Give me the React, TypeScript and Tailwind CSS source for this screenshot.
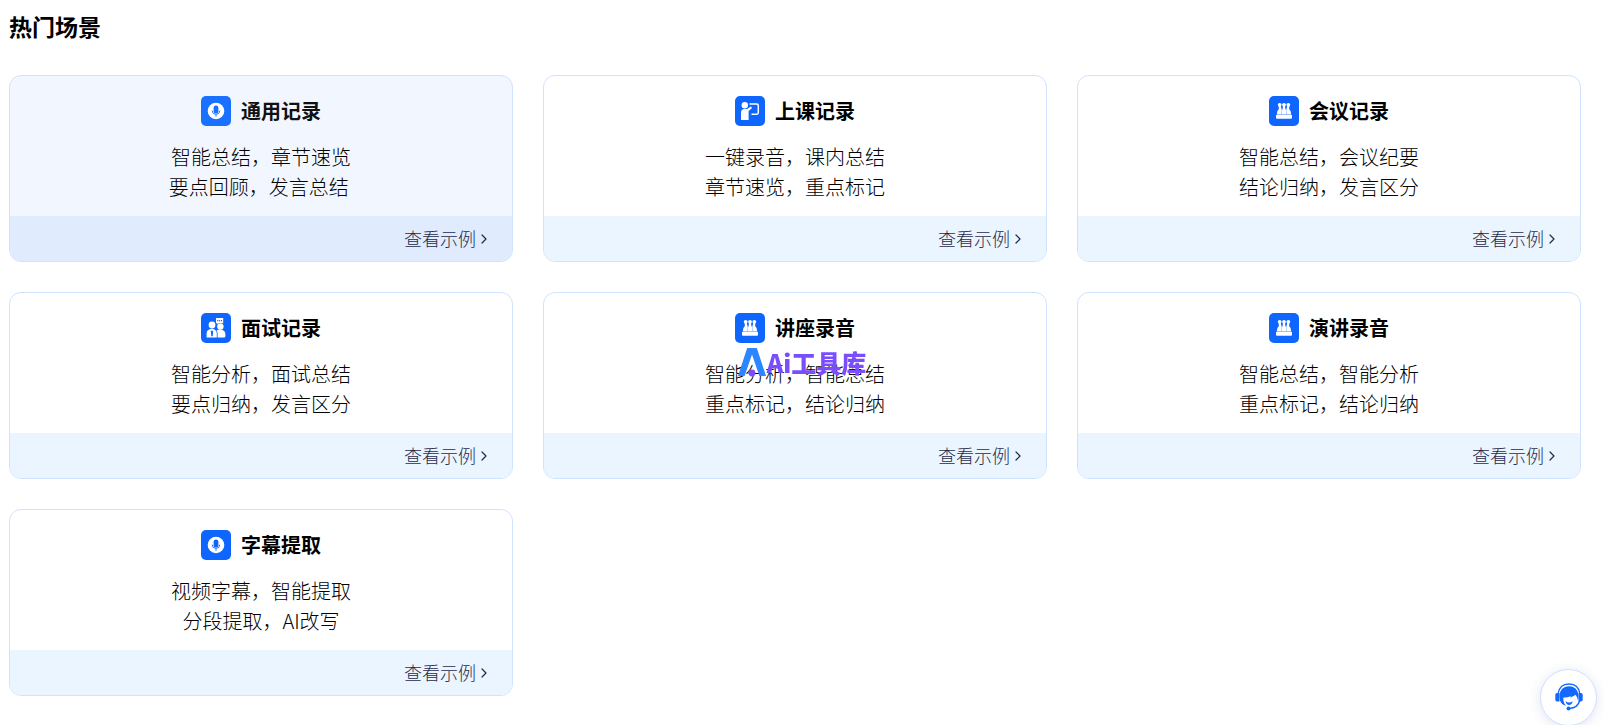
import { ChevronRight } from 'lucide-react';

type IconName = 'mic' | 'teach' | 'meeting' | 'interview';

const scenes: { title: string; icon: IconName; lines: string[]; active?: boolean }[] = [
  { title: '通用记录', icon: 'mic', lines: ['智能总结，章节速览', '要点回顾，发言总结\u00a0'], active: true },
  { title: '上课记录', icon: 'teach', lines: ['一键录音，课内总结', '章节速览，重点标记'] },
  { title: '会议记录', icon: 'meeting', lines: ['智能总结，会议纪要', '结论归纳，发言区分'] },
  { title: '面试记录', icon: 'interview', lines: ['智能分析，面试总结', '要点归纳，发言区分'] },
  { title: '讲座录音', icon: 'meeting', lines: ['智能分析，智能总结', '重点标记，结论归纳'] },
  { title: '演讲录音', icon: 'meeting', lines: ['智能总结，智能分析', '重点标记，结论归纳'] },
  { title: '字幕提取', icon: 'mic', lines: ['视频字幕，智能提取', '分段提取，AI改写'] },
];

function SceneIcon({ name, active }: { name: IconName; active?: boolean }) {
  const blue = active ? '#1a70ff' : '#0f66ff';
  return (
    <svg viewBox="0 0 30 30" className="size-[30px] shrink-0" aria-hidden="true">
      <rect width="30" height="30" rx="5" fill={blue} />
      {name === 'mic' && (
        <>
          <circle cx="15" cy="15" r="8.3" fill="#fff" />
          <rect x="12.6" y="9.4" width="4.8" height="8.2" rx="2.4" fill={blue} />
          <path d="M11.2 14.6a3.8 3.8 0 0 0 7.6 0M15 18.4v2.4" stroke={blue} strokeWidth="0.9" fill="none" />
        </>
      )}
      {name === 'teach' && (
        <>
          <circle cx="9.8" cy="9.2" r="3.2" fill="#fff" />
          <path d="M6 24v-7.5q0-3.5 3.5-3.500h2.700l3.800-2.400 1 1.500-3.400 3V24z" fill="#fff" />
          <path d="M14.500 8h7.200q1.600 0 1.600 1.600v7q0 1.600-1.600 1.600h-5.200" stroke="#fff" strokeWidth="1.500" fill="none" />
        </>
      )}
      {name === 'meeting' && (
        <>
          <circle cx="10.7" cy="8.8" r="1.9" fill="#fff" />
          <circle cx="15" cy="8.8" r="1.9" fill="#fff" />
          <circle cx="19.3" cy="8.8" r="1.9" fill="#fff" />
          <path d="M9.800 10h1.900l1.100 4-.4 4.300H7.800q.2-3.800 2-5z" fill="#fff" />
          <path d="M20.200 10h-1.900l-1.100 4 .4 4.300h4.600q-.2-3.800-2-5z" fill="#fff" />
          <path d="M14 10h2l.3 2.500q1.200 1.500 1.100 5.800h-4.800q-.1-4.300 1.100-5.800z" fill="#fff" />
          <path d="M7.800 18h14.400v.8H7.800z" fill="#fff" fillOpacity="0.600" />
          <path d="M7 18.900h16v2.900q0 1-1 1H8q-1 0-1-1z" fill="#fff" />
        </>
      )}
      {name === 'interview' && (
        <>
          <circle cx="11" cy="12" r="3.4" fill="#fff" />
          <circle cx="19.4" cy="13.600" r="3.200" fill="#fff" />
          <path d="M5.600 24.400v-3.800q0-4.400 5.400-4.800 4.600.4 4.800 4.800v3.800z" fill="#fff" />
          <path d="M16.600 24.400v-4q0-1.800-1-2.800 1.400-1.200 3.800-1.200 5 .4 5 5v1.500q0 1.500-1.500 1.500z" fill="#fff" />
          <path d="M11 17.200l1.100 1.200-.4 4.800h-1.400l-.4-4.800z" fill={blue} />
          <path d="M15 5h7.200v5.200h-4.400l-1.300 1.300v-1.300H15z" fill="#fff" />
          <path d="M16.200 7.600h1.100M18.100 7.600h1.100M20 7.600h1.100" stroke={blue} strokeWidth="1.200" />
        </>
      )}
    </svg>
  );
}

function SceneCard({ title, icon, lines, active }: (typeof scenes)[number]) {
  return (
    <article
      className={`overflow-hidden rounded-xl border border-[#cfe3ff] text-center ${active ? 'bg-[#f2f7ff]' : 'bg-white'}`}
    >
      <div className="px-5 pt-5 pb-3.5">
        <div className="flex items-center justify-center gap-2.5">
          <SceneIcon name={icon} active={active} />
          <h3 className={`text-[20px] leading-[30px] font-bold ${active ? 'text-[#111]' : 'text-black'}`}>{title}</h3>
        </div>
        <p className="mt-4 text-[20px] leading-[30px] font-light text-black">
          {lines.map((line) => (
            <span key={line} className="block">
              {line}
            </span>
          ))}
        </p>
      </div>
      <div className={`flex h-[45px] items-center justify-end pr-5 ${active ? 'bg-[#e0ecfe]' : 'bg-[#ebf5ff]'}`}>
        <a href="#" className="flex items-center text-[18px] leading-[27px] font-light text-[#1f2a4d]">
          查看示例
          <ChevronRight className="size-4" strokeWidth={1.8} aria-hidden="true" />
        </a>
      </div>
    </article>
  );
}

function Watermark() {
  return (
    <div className="pointer-events-none fixed inset-0 flex items-center justify-center gap-px pb-0.5">
      <svg viewBox="0 0 28 30" className="h-[30px] w-7" aria-hidden="true">
        <path d="M0 29L9.200 1h9.600L28 29h-6.600L14 7.500 6.600 29z" fill="#2b86ff" />
        <circle cx="14" cy="26" r="3.400" fill="#7c4dff" />
      </svg>
      <span className="text-[25px] leading-[30px] font-black text-[#7a4dff]">Ai工具库</span>
    </div>
  );
}

function ServiceButton() {
  return (
    <button
      type="button"
      aria-label="客服"
      className="fixed right-[7px] -bottom-px flex size-[57px] items-center justify-center rounded-full border border-[#cfe0ff] bg-white pb-0.5 shadow-[0_2px_12px_rgba(60,80,160,0.15)]"
    >
      <svg viewBox="0 0 28 28" className="size-7" aria-hidden="true">
        <path d="M3 11C4 4 8.500 1 14 1s10 3 11 10" stroke="#1468ff" strokeWidth="1.300" fill="none" />
        <path d="M4.500 10v8.500H2q-1.700 0-1.700-1.700v-5Q.3 10 2 10zM23.500 10v8.500H26q1.700 0 1.700-1.700v-5q0-1.800-1.700-1.800z" fill="#1468ff" />
        <path
          d="M5 17.500C3 8.500 7.500 3.300 14 3.300S25 8.500 23 17.500c-.5-2.500-1.200-4-2.600-5.700-1 1-3.400 2.400-5.400 2.600l1-1.400c-2.500 1.200-5 1.700-7.600 1.500-.4 3 .6 6 2.600 8.200-3-.5-5-2.200-6-5.200z"
          fill="#1468ff"
        />
        <path d="M10.500 18.200q3.600 2.600 7.200 0-.8 3.800-3.600 3.800t-3.600-3.800z" fill="#1468ff" />
        <path d="M24.500 18q-1.500 6.500-10 7.500" stroke="#1468ff" strokeWidth="1.400" fill="none" />
        <circle cx="13.500" cy="25.500" r="2" fill="#1468ff" />
      </svg>
    </button>
  );
}

export default function App() {
  return (
    <main className="bg-white pt-2.5 pr-[23px] pb-6 pl-[9px] font-['Noto_Sans_CJK_SC',sans-serif]">
      <h2 className="text-[23px] leading-8 font-bold text-black">热门场景</h2>
      <section className="mt-[33px] grid grid-cols-3 gap-[30px]">
        {scenes.map((scene) => (
          <SceneCard key={scene.title} {...scene} />
        ))}
      </section>
      <Watermark />
      <ServiceButton />
    </main>
  );
}
